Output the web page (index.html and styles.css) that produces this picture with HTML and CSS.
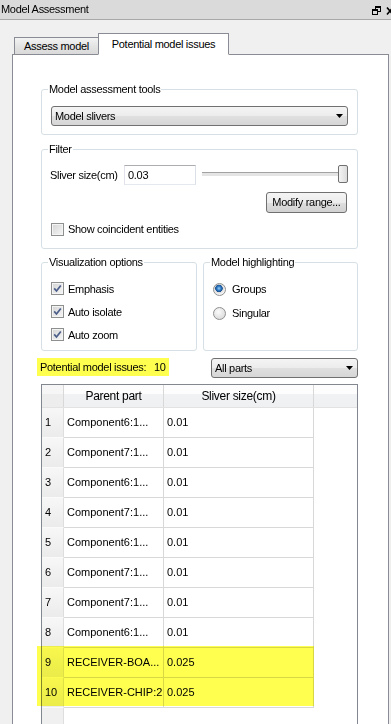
FILE: index.html
```html
<!DOCTYPE html>
<html lang="en">
<head>
    <meta charset="UTF-8">
    <meta name="viewport" content="width=device-width, initial-scale=1.0">
    <title>Model Assessment</title>
    <link rel="stylesheet" href="styles.css">
</head>
<body>
    <div class="titlebar">
        <span>Model Assessment</span>
        <svg class="title-icons" width="19" height="10" viewBox="0 0 19 10">
            <rect x="3.5" y="0.5" width="5" height="5" fill="none" stroke="#000"/>
            <rect x="3" y="0" width="6" height="2" fill="#000"/>
            <rect x="0.5" y="3.5" width="5" height="5" fill="#dadada" stroke="#000"/>
            <rect x="0" y="3" width="6" height="2" fill="#000"/>
            <path d="M15 1.5 L21 8.5 M21 1.5 L15 8.5" stroke="#000" stroke-width="1.6"/>
        </svg>
    </div>

    <div class="tabs">
        <div class="tab">Assess model</div>
        <div class="tab active">Potential model issues</div>
    </div>

    <div class="pane">
        <fieldset class="group">
            <legend>Model assessment tools</legend>
            <div class="combo">
                <span>Model slivers</span>
                <svg width="7" height="4" viewBox="0 0 7 4"><polygon points="0,0 7,0 3.5,4" fill="#000"/></svg>
            </div>
        </fieldset>

        <fieldset class="group filter">
            <legend>Filter</legend>
            <div class="field-row">
                <span class="field-label">Sliver size(cm)</span>
                <div class="text-input">0.03</div>
                <div class="slider"><span class="thumb"></span></div>
            </div>
            <div class="button-row">
                <div class="btn">Modify range...</div>
            </div>
            <div class="check short">
                <span class="box"></span>
                <span>Show coincident entities</span>
            </div>
        </fieldset>

        <div class="pair">
            <fieldset class="group vis">
                <legend>Visualization options</legend>
                <div class="check">
                    <span class="box"><svg width="11" height="11" viewBox="0 0 11 11"><path d="M2.2 5.4 L4.5 8 L8.8 2.4" fill="none" stroke="#4b5e8a" stroke-width="1.7"/></svg></span>
                    <span>Emphasis</span>
                </div>
                <div class="check">
                    <span class="box"><svg width="11" height="11" viewBox="0 0 11 11"><path d="M2.2 5.4 L4.5 8 L8.8 2.4" fill="none" stroke="#4b5e8a" stroke-width="1.7"/></svg></span>
                    <span>Auto isolate</span>
                </div>
                <div class="check">
                    <span class="box"><svg width="11" height="11" viewBox="0 0 11 11"><path d="M2.2 5.4 L4.5 8 L8.8 2.4" fill="none" stroke="#4b5e8a" stroke-width="1.7"/></svg></span>
                    <span>Auto zoom</span>
                </div>
            </fieldset>
            <fieldset class="group hl">
                <legend>Model highlighting</legend>
                <div class="option">
                    <span class="radio on"></span>
                    <span>Groups</span>
                </div>
                <div class="option">
                    <span class="radio"></span>
                    <span>Singular</span>
                </div>
            </fieldset>
        </div>

        <div class="status">
            <span class="count"><span class="count-label">Potential model issues:</span><span>10</span></span>
            <div class="combo parts">
                <span>All parts</span>
                <svg width="7" height="4" viewBox="0 0 7 4"><polygon points="0,0 7,0 3.5,4" fill="#000"/></svg>
            </div>
        </div>

        <div class="grid">
            <div class="grid-head">
                <div class="hcell corner"></div>
                <div class="hcell part">Parent part</div>
                <div class="hcell size">Sliver size(cm)</div>
                <div class="hcell rest"></div>
            </div>
            <div class="rows">
                <div class="row"><div class="num">1</div><div class="cell part">Component6:1...</div><div class="cell size">0.01</div></div>
                <div class="row"><div class="num">2</div><div class="cell part">Component7:1...</div><div class="cell size">0.01</div></div>
                <div class="row"><div class="num">3</div><div class="cell part">Component6:1...</div><div class="cell size">0.01</div></div>
                <div class="row"><div class="num">4</div><div class="cell part">Component7:1...</div><div class="cell size">0.01</div></div>
                <div class="row"><div class="num">5</div><div class="cell part">Component6:1...</div><div class="cell size">0.01</div></div>
                <div class="row"><div class="num">6</div><div class="cell part">Component7:1...</div><div class="cell size">0.01</div></div>
                <div class="row"><div class="num">7</div><div class="cell part">Component7:1...</div><div class="cell size">0.01</div></div>
                <div class="row"><div class="num">8</div><div class="cell part">Component6:1...</div><div class="cell size">0.01</div></div>
                <div class="marked">
                    <div class="row"><div class="num">9</div><div class="cell part">RECEIVER-BOA...</div><div class="cell size">0.025</div></div>
                    <div class="row"><div class="num">10</div><div class="cell part">RECEIVER-CHIP:2</div><div class="cell size">0.025</div></div>
                </div>
            </div>
        </div>
    </div>
</body>
</html>
```

FILE: styles.css
```css
* {
    box-sizing: border-box;
}
body {
    margin: 0;
    height: 724px;
    overflow: hidden;
    background: #f0f0f0;
    font-family: "Liberation Sans", Arial, sans-serif;
    font-size: 11px;
    letter-spacing: -0.3px;
    color: #000;
}
.titlebar {
    display: flex;
    justify-content: space-between;
    height: 20px;
    padding-left: 1px;
    background: #dadada;
    border-bottom: 1px solid #a8a8a8;
    line-height: 19px;
}
.title-icons {
    margin-top: 6px;
}
.tabs {
    display: flex;
    align-items: flex-end;
    height: 22px;
    margin: 13px 0 -1px 14px;
    position: relative;
    z-index: 1;
}
.tab {
    width: 84px;
    height: 18px;
    border: 1px solid #898c95;
    border-right: 0;
    background: linear-gradient(#f3f3f3, #e4e4e4 50%, #d9d9d9);
    text-align: center;
    line-height: 16px;
}
.tab.active {
    width: 131px;
    height: 22px;
    border-right: 1px solid #898c95;
    border-bottom-color: #fff;
    background: #fff;
    line-height: 20px;
}
.pane {
    width: 377px;
    height: 670px;
    margin-left: 12px;
    padding: 28px 30px 0 28px;
    border: 1px solid #898c95;
    border-bottom: 0;
    background: #fff;
}
.group {
    margin: 0;
    min-width: 0;
    padding: 10px 9px 8px 9px;
    border: 1px solid #d5dfe5;
    border-radius: 3px;
}
.group legend {
    margin-left: -3px;
    padding: 0 1px;
    line-height: 13px;
}
.combo {
    display: flex;
    align-items: center;
    justify-content: space-between;
    height: 20px;
    padding: 0 4px 0 3px;
    border: 1px solid #707070;
    border-radius: 3px;
    background: linear-gradient(#f4f4f4, #ececec 50%, #e0e0e0 50%, #d6d6d6);
}
.filter {
    margin-top: 8px;
    padding: 9px 9px 11px 9px;
}
.field-row {
    display: flex;
    align-items: center;
    height: 20px;
}
.field-label {
    width: 74px;
    margin-left: -1px;
}
.text-input {
    width: 72px;
    height: 20px;
    padding-left: 3px;
    border: 1px solid;
    border-color: #abadb3 #dbdfe6 #e3e9ef #e2e3ea;
    line-height: 18px;
}
.slider {
    flex: 1;
    height: 20px;
    margin-left: 6px;
    position: relative;
}
.slider::before {
    content: "";
    position: absolute;
    left: 0;
    right: 3px;
    top: 7px;
    height: 3px;
    border-top: 1px solid #a2a2a2;
    border-bottom: 1px solid #fff;
    background: #e4e4e4;
}
.thumb {
    position: absolute;
    right: 0;
    top: 0;
    width: 10px;
    height: 18px;
    border: 1px solid #707070;
    border-radius: 2px;
    background: linear-gradient(to right, #f4f4f4, #dcdcdc);
}
.button-row {
    display: flex;
    justify-content: flex-end;
    margin-top: 7px;
}
.btn {
    width: 81px;
    height: 21px;
    margin-right: 1px;
    border: 1px solid #707070;
    border-radius: 3px;
    background: linear-gradient(#f4f4f4, #ececec 50%, #dfdfdf 50%, #d2d2d2);
    text-align: center;
    line-height: 19px;
}
.check {
    display: flex;
    align-items: center;
    gap: 4px;
    height: 23px;
}
.check.short {
    height: 16px;
    margin-top: 8px;
}
.box {
    display: flex;
    align-items: center;
    justify-content: center;
    width: 13px;
    height: 13px;
    border: 1px solid #8e8f8f;
    background: linear-gradient(135deg, #d4d4d4, #f6f6f6);
    box-shadow: inset 0 0 0 1px #f4f4f4;
}
.pair {
    display: flex;
    gap: 6px;
    margin-top: 7px;
}
.vis {
    width: 156px;
    padding: 8px 9px 4px 9px;
}
.hl {
    width: 155px;
    padding: 8px 9px 4px 9px;
}
.option {
    display: flex;
    align-items: center;
    gap: 6px;
    height: 24px;
}
.radio {
    width: 13px;
    height: 13px;
    border: 1px solid #8e8f8f;
    border-radius: 50%;
    background: radial-gradient(circle at 40% 35%, #fbfbfb, #d3d3d3);
}
.radio.on {
    background: radial-gradient(circle at 45% 40%, #9ad0f6 0, #2f7cc6 2px, #1b4f8e 3.5px, #dcdcdc 4px, #f4f4f4 6px);
}
.status {
    display: flex;
    justify-content: space-between;
    align-items: flex-start;
    margin-top: 7px;
    height: 20px;
}
.count {
    display: flex;
    width: 132px;
    height: 18px;
    margin-left: -4px;
    padding-left: 3px;
    background: #ffff50;
    line-height: 18px;
}
.count-label {
    width: 114px;
}
.parts {
    width: 147px;
}
.grid {
    height: 340px;
    margin-top: 6px;
    border: 1px solid #828790;
    border-bottom: 0;
    background: linear-gradient(to right, #f0f0f0 0, #f0f0f0 21px, #dedede 21px, #dedede 22px, #fff 22px);
}
.grid-head {
    display: flex;
    height: 23px;
    border-bottom: 1px solid #e2e2e2;
    background: linear-gradient(#fdfdfd 0, #fdfdfd 40%, #f1f2f4 40%, #eff0f2);
}
.hcell {
    height: 22px;
    border-right: 1px solid #d8d8d8;
    text-align: center;
    font-size: 12px;
    line-height: 22px;
}
.corner {
    width: 22px;
    background: linear-gradient(#f6f6f6 0, #f6f6f6 40%, #ededed 40%);
}
.part {
    width: 100px;
}
.size {
    width: 150px;
}
.rest {
    flex: 1;
    border-right: 0;
}
.rows {
    display: flex;
    flex-direction: column;
    align-items: flex-start;
}
.row {
    display: flex;
    height: 30px;
    letter-spacing: 0;
    line-height: 29px;
}
.num {
    width: 22px;
    padding-left: 3px;
    border-right: 1px solid #dedede;
    border-bottom: 1px solid #fafafa;
    background: linear-gradient(#f7f7f7, #ebebeb);
}
.cell {
    padding-left: 3px;
    border-right: 1px solid #d8d8d8;
    border-bottom: 1px solid #d8d8d8;
    white-space: nowrap;
    overflow: hidden;
}
.marked {
    display: flex;
    flex-direction: column;
    position: relative;
}
.marked::after {
    content: "";
    position: absolute;
    left: -5px;
    top: -2px;
    right: 0;
    bottom: 2px;
    background: #ffff50;
    mix-blend-mode: multiply;
    pointer-events: none;
}
```
